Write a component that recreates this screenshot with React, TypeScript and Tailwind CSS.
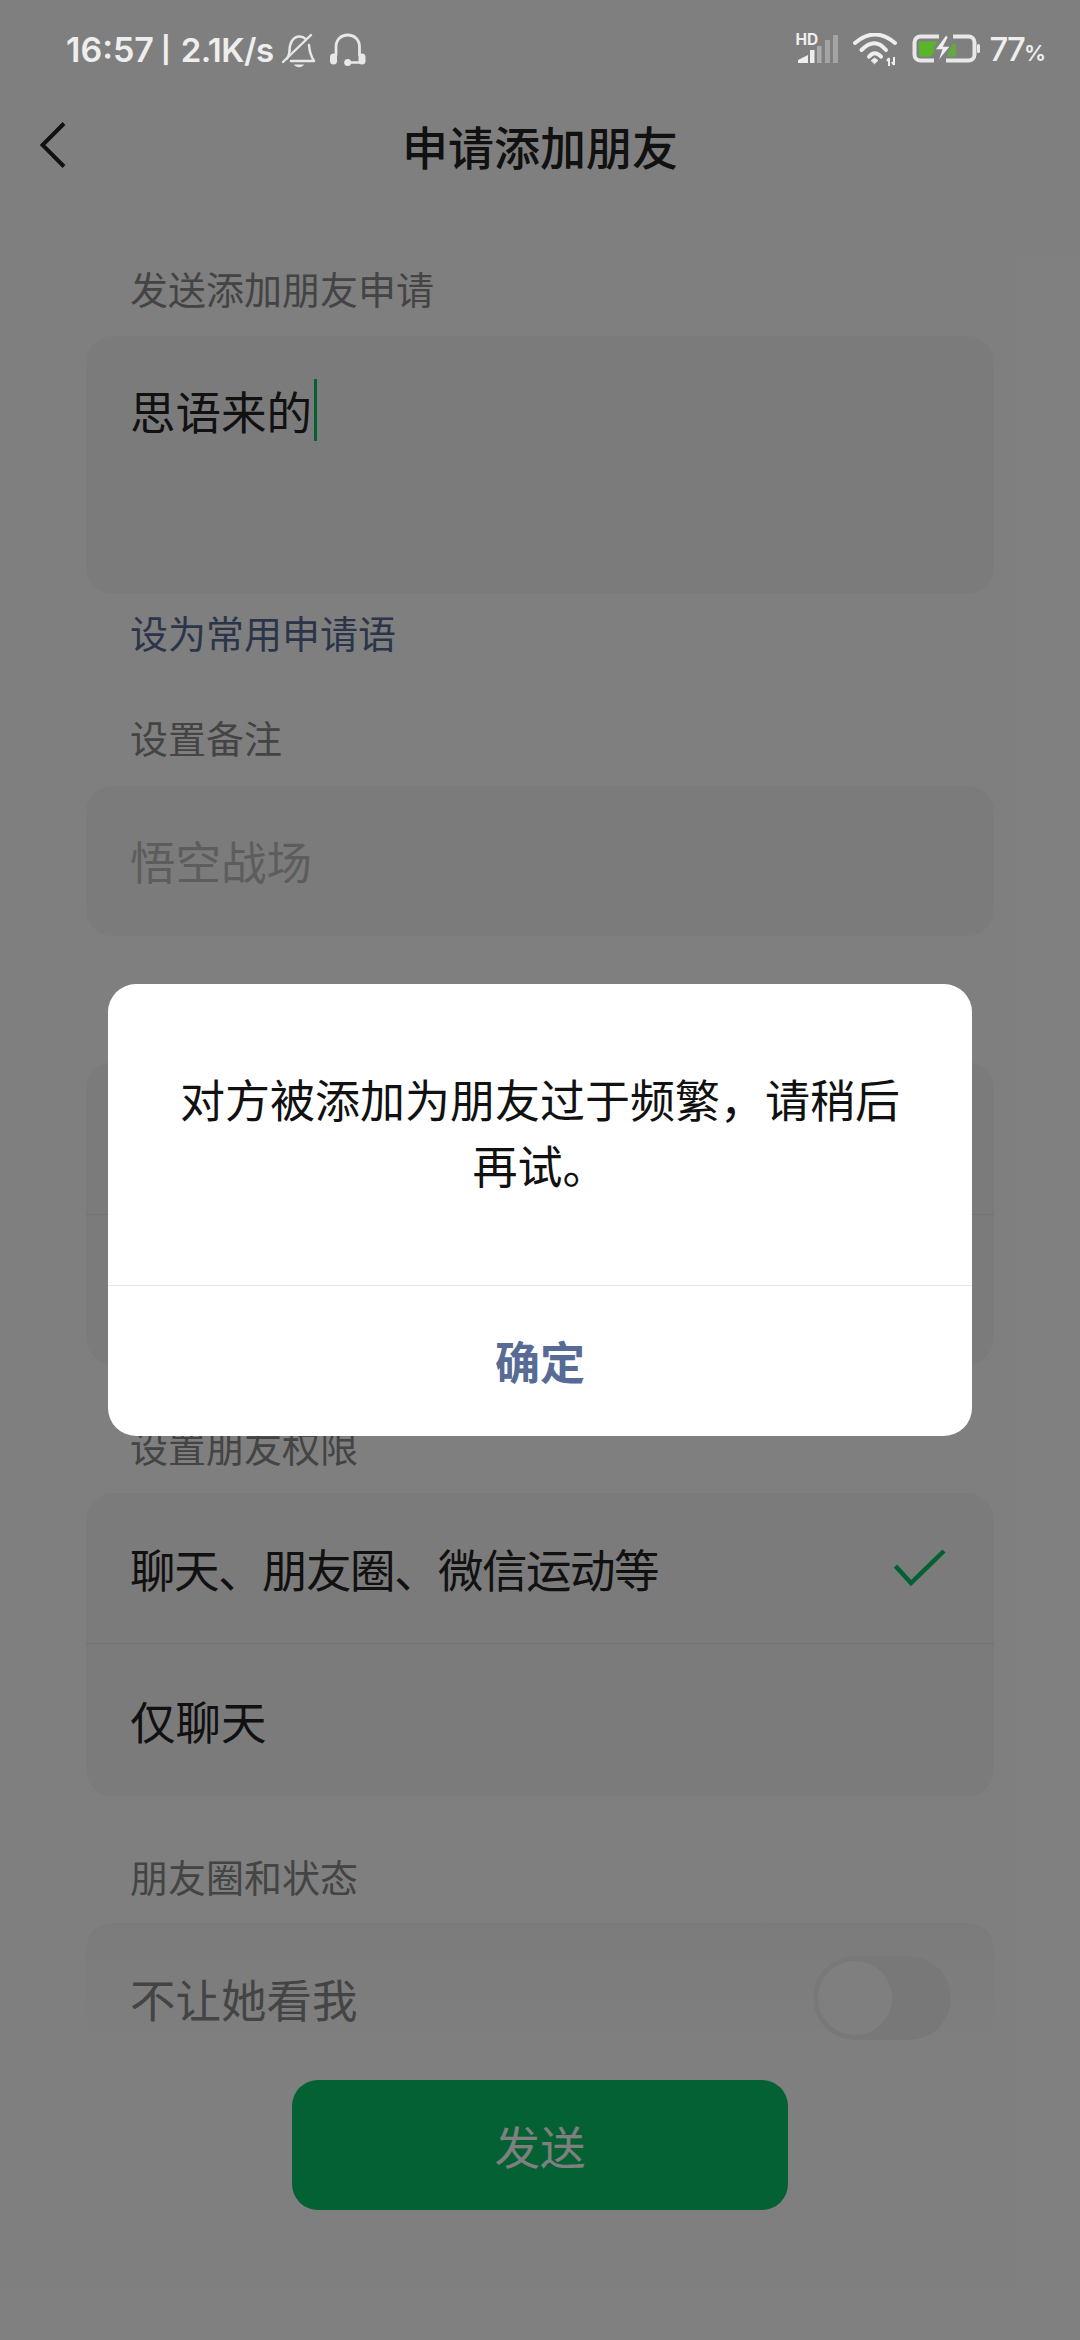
const CJK = "font-['Noto_Sans_CJK_SC','Noto_Sans',sans-serif]";

function BellOff() {
  return (
    <svg width="34" height="35" viewBox="0 0 34 35" fill="none" stroke="#e8e8e8" strokeWidth="2.400" strokeLinecap="round" strokeLinejoin="round">
      <path d="M7.500 18C7.500 10 11 3.500 17.500 3.500c2.500 0 4.500.8 6 2.300" />
      <path d="M27 12c.4 6 1.500 10.500 5 16H9" />
      <path d="M7.500 18c-.3 3-1 5.500-2.500 7.500" />
      <path d="M1 29 29 2" />
      <path d="M12 31.500h10c-1 1.800-3 2.800-5 2.800s-4-1-5-2.800z" fill="#e8e8e8" stroke="none" />
    </svg>
  );
}

function Headset() {
  return (
    <svg width="36" height="34" viewBox="0 0 36 34" fill="none" stroke="#e8e8e8" strokeWidth="2.800" strokeLinecap="round">
      <path d="M6 22V14C6 6.500 11 2 17.700 2S29.500 6.500 29.500 14v8" />
      <rect x="0" y="20.500" width="7" height="11" rx="3.500" fill="#e8e8e8" stroke="none" />
      <rect x="28.500" y="20.500" width="7" height="11" rx="3.500" fill="#e8e8e8" stroke="none" />
      <path d="M18 29.500h13" strokeWidth="2.400" />
      <circle cx="17.700" cy="29.500" r="3.500" fill="#e8e8e8" stroke="none" />
    </svg>
  );
}

function Signal() {
  return (
    <svg width="42" height="30" viewBox="0 0 42 30" className="shrink-0">
      <path d="M2 30v-3l10-5v8z" fill="#eeeeee" />
      <rect x="14" y="17" width="4.500" height="13" fill="#eeeeee" />
      <rect x="21" y="13" width="4.500" height="17" fill="#ababab" />
      <rect x="29" y="7" width="5" height="23" fill="#a4a4a4" />
      <rect x="37" y="2" width="5" height="28" fill="#a4a4a4" />
    </svg>
  );
}

function Wifi() {
  return (
    <svg width="44" height="33" viewBox="0 0 44 33" fill="none" stroke="#eeeeee" strokeWidth="4" strokeLinecap="round">
      <path d="M2 10Q22-7 42 10" />
      <path d="M8.500 17Q21.700 3.500 33 17" />
      <path d="M16 23.700Q21.700 17 28 23.700" />
      <path d="M18.500 27.500 21.700 25l3.200 2.500-3.200 3z" fill="#eeeeee" stroke="#eeeeee" strokeWidth="1" />
      <path d="M36 33v-8M34 28l2-3M41 24v8M39 29l2 3" strokeWidth="2" strokeLinecap="butt" />
    </svg>
  );
}

function Battery() {
  return (
    <svg width="68" height="30" viewBox="0 0 68 30" className="shrink-0">
      <path d="M27 3.500H8.500a6 6 0 0 0-6 6v12a6 6 0 0 0 6 6H22M41 3.500h15.500a6 6 0 0 1 6 6v12a6 6 0 0 1-6 6H34" fill="none" stroke="#e8e8e8" strokeWidth="4" />
      <rect x="65" y="11" width="3" height="9" rx="1.500" fill="#e8e8e8" />
      <path d="M7 8.500h19l-5 6.500 3 1-5 7.500H7z" fill="#5bb52a" />
      <path d="M40 11h4v12.500h-9z" fill="#5bb52a" opacity="0.800" />
      <path d="M34 1.500 22.500 17h7L25 30l14-17h-7l4.500-9z" fill="#eeeeee" stroke="#808080" strokeWidth="1.500" />
    </svg>
  );
}

function SectionLabel({ children }: { children: string }) {
  return <p className="pl-[130px] text-[38px] leading-[54px] text-[#888888]">{children}</p>;
}

export default function App() {
  return (
    <div className={`relative w-[1080px] h-[2340px] overflow-hidden bg-white ${CJK}`}>
      {/* Nav bar */}
      <header className="relative h-[200px]">
        <svg width="26" height="46" viewBox="0 0 26 46" fill="none" stroke="#222222" strokeWidth="4" className="absolute left-[40px] top-[122px]">
          <path d="M24 1.500 2.500 23 24 44.500" />
        </svg>
        <h1 className="pt-[111px] text-center text-[46px] leading-[68px] font-medium text-[#222222]">申请添加朋友</h1>
      </header>

      {/* Form */}
      <main className="pt-[61px]">
        <SectionLabel>发送添加朋友申请</SectionLabel>
        <div className="mx-[86px] mt-[21px] h-[258px] rounded-[26px] bg-[#f7f7f7] pl-[44px] pt-[43px]">
          <div className="flex items-center">
            <span className="text-[45.500px] leading-[62px] text-[#222222]">思语来的</span>
            <span className="ml-[2px] h-[62px] w-[3px] bg-[#07c160]" />
          </div>
        </div>
        <p className="mt-[11px] pl-[130px] text-[38px] leading-[54px] text-[#576b95]">设为常用申请语</p>
        <div className="mt-[51px]">
          <SectionLabel>设置备注</SectionLabel>
        </div>
        <div className="mx-[86px] mt-[22px] flex h-[150px] items-center rounded-[26px] bg-[#f7f7f7] pb-[2px] pl-[44px]">
          <span className="text-[45.500px] text-[#bbbbbb]">悟空战场</span>
        </div>

        {/* Second card, mostly behind the dialog */}
        <div className="mx-[86px] mt-[126px] h-[302px] rounded-[26px] bg-[#f7f7f7]">
          <div className="h-[153px] border-b border-[#e6e6e6]" />
        </div>

        <div className="mt-[55px]">
          <SectionLabel>设置朋友权限</SectionLabel>
        </div>
        <div className="mx-[86px] mt-[20px] rounded-[26px] bg-[#f7f7f7]">
          <div className="flex h-[151px] items-center justify-between border-b border-[#e6e6e6] pl-[44px] pr-[48px]">
            <span className="text-[45.500px] tracking-[-1.500px] text-[#222222]">聊天、朋友圈、微信运动等</span>
            <svg width="52" height="36" viewBox="0 0 52 36" fill="none" stroke="#07c160" strokeWidth="4.500">
              <path d="M1.500 16 17 33 50 1" />
            </svg>
          </div>
          <div className="flex h-[152px] items-center pl-[44px]">
            <span className="text-[45.500px] text-[#222222]">仅聊天</span>
          </div>
        </div>

        <div className="mt-[53px]">
          <SectionLabel>朋友圈和状态</SectionLabel>
        </div>
      </main>

      {/* Last card fades out above the send button */}
      <div className="mx-[86px] mt-[20px] flex h-[130px] items-center justify-between rounded-t-[26px] bg-gradient-to-b from-[#f7f7f7] to-white pl-[44px] pr-[43px] pt-[20px]">
        <span className="text-[45.500px] text-[#888888]">不让她看我</span>
        <div className="flex h-[84px] w-[138px] items-center rounded-full bg-[#f0f0f0] pl-[5px]">
          <div className="h-[74px] w-[74px] rounded-full bg-white" />
        </div>
      </div>

      <button className="mx-auto mt-[27px] flex h-[130px] w-[496px] items-center justify-center rounded-[26px] bg-[#07c268] text-[45.500px] text-white">
        发送
      </button>

      {/* Dimmed layer and dialog */}
      <div className="absolute inset-0 flex items-start justify-center bg-black/50 pt-[984px]">
        <div className="w-[864px] rounded-[28px] bg-white">
          <p className="h-[301px] px-[50px] pt-[82px] text-center text-[45px] leading-[66px] text-[#111111]">
            对方被添加为朋友过于频繁，请稍后再试。
          </p>
          <div className="flex h-[151px] items-center justify-center border-t border-[#e5e5e5] text-[45px] font-bold text-[#576b95]">
            确定
          </div>
        </div>
      </div>

      {/* Status bar stays above the dimmed layer */}
      <div className="absolute left-0 right-0 top-0 flex h-[100px] items-start justify-between pl-[66px] pr-[34px] pt-[33px] font-['Inter',sans-serif] text-[#eeeeee]">
        <div className="flex h-[34px] items-center">
          <span className="text-[34px] leading-[34px] font-semibold">16:57</span>
          <span className="ml-[7px] text-[26px] leading-[26px] font-bold">|</span>
          <span className="ml-[10px] text-[33px] leading-[34px] font-semibold tracking-[-0.500px]">2.1K/s</span>
          <span className="ml-[8px]">
            <BellOff />
          </span>
          <span className="ml-[14px]">
            <Headset />
          </span>
        </div>
        <div className="flex items-start">
          <div className="relative">
            <span className="absolute -top-[1px] left-0 text-[15.500px] leading-[15px] font-bold">HD</span>
            <Signal />
          </div>
          <span className="ml-[15px]">
            <Wifi />
          </span>
          <span className="ml-[15px]">
            <Battery />
          </span>
          <span className="ml-[10px] text-[33px] leading-[33px] font-medium tracking-[-2px]">
            77<span className="text-[22px] font-semibold tracking-normal">%</span>
          </span>
        </div>
      </div>
    </div>
  );
}
